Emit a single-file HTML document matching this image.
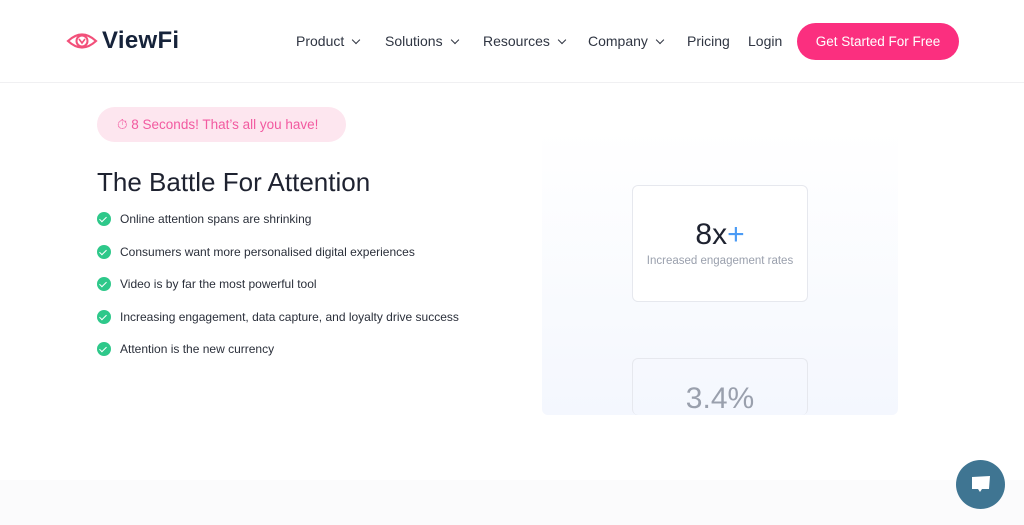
<!DOCTYPE html>
<html><head><meta charset="utf-8"><style>
*{margin:0;padding:0;box-sizing:border-box}
body{width:1024px;height:525px;overflow:hidden;background:#fff;font-family:"Liberation Sans",sans-serif;position:relative;color:#2a2f3a}
.hdr{position:absolute;left:0;top:0;width:1024px;height:83px;border-bottom:1px solid #f0f0f2}
.logo{position:absolute;left:66px;top:28px}
.logotxt{position:absolute;left:102px;top:27px;font-size:24px;font-weight:bold;color:#16233a;letter-spacing:0.3px}
.nav{position:absolute;top:33px;font-size:14px;color:#2f3542}
.chev{display:inline-block;width:6px;height:6px;border-right:1.5px solid #2f3542;border-bottom:1.5px solid #2f3542;transform:rotate(45deg);margin-left:9px;position:relative;top:-3px}
.btn{position:absolute;left:797px;top:23px;width:162px;height:37px;border-radius:19px;background:#fb2f7f;color:#fff;font-size:13.5px;text-align:center;line-height:37px}
.pill{position:absolute;left:97px;top:107px;width:249px;height:35px;border-radius:18px;background:#fde6ef;color:#f25aa0;font-size:13.5px;line-height:35px;padding-left:20px}
h1{position:absolute;left:97px;top:167px;font-size:26px;font-weight:normal;color:#1e2230}
.li{position:absolute;left:97px;font-size:12px;color:#2a2f3a}
.li i{display:inline-block;width:14px;height:14px;border-radius:50%;background:#2ec88a;vertical-align:-3px;margin-right:9px;position:relative}
.li i:after{content:"";position:absolute;left:4px;top:3px;width:3px;height:6px;border-right:1.5px solid #fff;border-bottom:1.5px solid #fff;transform:rotate(45deg)}
.panel{position:absolute;left:542px;top:130px;width:356px;height:285px;border-radius:6px;background:linear-gradient(#fff,#f4f7fe)}
.card{position:absolute;left:632px;width:176px;border:1px solid #e6e8ee;border-radius:6px;text-align:center}
.bottom{position:absolute;left:0;top:480px;width:1024px;height:45px;background:#fbfbfc}
.chat{position:absolute;left:956px;top:460px;width:49px;height:49px;border-radius:50%;background:#3f7592}
</style></head><body>
<div class="hdr">
<svg class="logo" width="32" height="26" viewBox="0 0 32 26"><path d="M2 13 Q16 0 30 13 Q16 26 2 13Z" fill="none" stroke="#f2507a" stroke-width="2.2"/><circle cx="16" cy="13" r="5.5" fill="none" stroke="#f2507a" stroke-width="2"/><path d="M13 11 L16 15 L19 11" fill="none" stroke="#f2507a" stroke-width="1.6"/></svg>
<div class="logotxt">ViewFi</div>
<div class="nav" style="left:296px">Product<span class="chev"></span></div>
<div class="nav" style="left:385px">Solutions<span class="chev"></span></div>
<div class="nav" style="left:483px">Resources<span class="chev"></span></div>
<div class="nav" style="left:588px">Company<span class="chev"></span></div>
<div class="nav" style="left:687px">Pricing</div>
<div class="nav" style="left:748px">Login</div>
<div class="btn">Get Started For Free</div>
</div>
<div class="pill">⏱ 8 Seconds! That’s all you have!</div>
<h1>The Battle For Attention</h1>
<div class="li" style="top:212px"><i></i>Online attention spans are shrinking</div>
<div class="li" style="top:245px"><i></i>Consumers want more personalised digital experiences</div>
<div class="li" style="top:277px"><i></i>Video is by far the most powerful tool</div>
<div class="li" style="top:310px"><i></i>Increasing engagement, data capture, and loyalty drive success</div>
<div class="li" style="top:342px"><i></i>Attention is the new currency</div>
<div class="panel"></div>
<div class="card" style="top:185px;height:117px;background:#fff"><div style="font-size:30px;color:#1e2230;margin-top:32px">8x<span style="color:#4b9bf5">+</span></div><div style="font-size:11.5px;color:#9aa0ad;margin-top:3px">Increased engagement rates</div></div>
<div class="card" style="top:358px;height:57px;border-bottom:none;overflow:hidden"><div style="font-size:30px;color:#9aa0ad;margin-top:23px">3.4%</div></div>
<div class="bottom"></div>
<div class="chat"><svg width="49" height="49" viewBox="0 0 49 49"><path d="M16 17 L34 16 L33 29 L26 29 L24 32 L22 29 L16 29Z" fill="#fff"/></svg></div>
</body></html>
